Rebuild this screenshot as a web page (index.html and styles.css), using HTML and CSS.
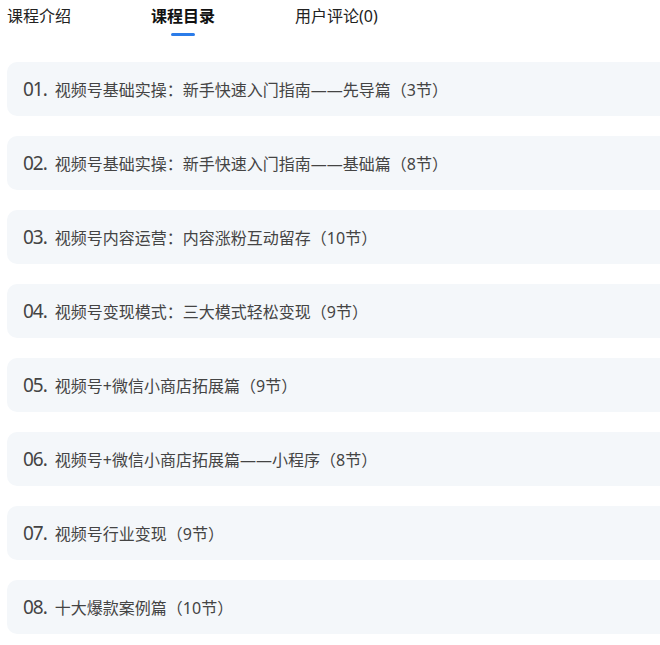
FILE: index.html
```html
<!DOCTYPE html>
<html lang="zh-CN">
<head>
    <meta charset="UTF-8">
    <meta name="viewport" content="width=device-width, initial-scale=1.0">
    <title>课程目录</title>
    <link rel="stylesheet" href="styles.css">
</head>
<body>
    <!-- Tabs -->
    <div class="tabs">
        <div class="tab">课程介绍</div>
        <div class="tab active">课程目录</div>
        <div class="tab">用户评论(0)</div>
    </div>

    <!-- Chapter list -->
    <div class="chapter-list">
        <div class="chapter"><span class="num">01.</span><span class="title">视频号基础实操：新手快速入门指南——先导篇（3节）</span></div>
        <div class="chapter"><span class="num">02.</span><span class="title">视频号基础实操：新手快速入门指南——基础篇（8节）</span></div>
        <div class="chapter"><span class="num">03.</span><span class="title">视频号内容运营：内容涨粉互动留存（10节）</span></div>
        <div class="chapter"><span class="num">04.</span><span class="title">视频号变现模式：三大模式轻松变现（9节）</span></div>
        <div class="chapter"><span class="num">05.</span><span class="title">视频号+微信小商店拓展篇（9节）</span></div>
        <div class="chapter"><span class="num">06.</span><span class="title">视频号+微信小商店拓展篇——小程序（8节）</span></div>
        <div class="chapter"><span class="num">07.</span><span class="title">视频号行业变现（9节）</span></div>
        <div class="chapter"><span class="num">08.</span><span class="title">十大爆款案例篇（10节）</span></div>
    </div>
</body>
</html>
```

FILE: styles.css
```css
* {
    margin: 0;
    padding: 0;
    box-sizing: border-box;
}

body {
    font-family: "Noto Sans", "Noto Sans CJK SC", sans-serif;
    background-color: #fff;
    color: #333;
    overflow: hidden;
    padding-left: 7px;
}

/* Tabs */
.tabs {
    display: flex;
    gap: 80px;
    height: 62px;
}

.tab {
    position: relative;
    font-size: 16px;
    line-height: 22px;
    padding-top: 5px;
    color: #222;
}

.tab.active {
    font-weight: bold;
    color: #111;
}

.tab.active::after {
    content: "";
    position: absolute;
    left: 50%;
    top: 33px;
    width: 24px;
    height: 3px;
    margin-left: -12px;
    border-radius: 2px;
    background-color: #2b7ce9;
}

/* Chapter list */
.chapter-list {
    display: flex;
    flex-direction: column;
    gap: 20px;
    width: 680px;
}

.chapter {
    display: flex;
    align-items: center;
    height: 54px;
    padding-left: 16px;
    background-color: #f4f7fa;
    border-radius: 10px;
}

.num {
    font-size: 19px;
    letter-spacing: -1px;
    color: #444;
    margin-right: 8px;
}

.title {
    font-size: 16px;
    color: #444;
}
```
